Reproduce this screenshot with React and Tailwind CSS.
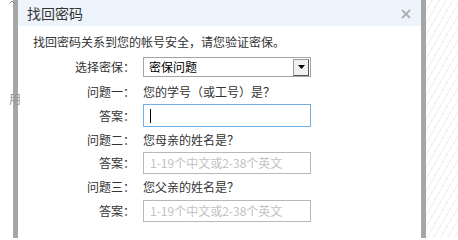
import React from "react";

const font = { fontFamily: '"Noto Sans CJK SC", "Liberation Sans", sans-serif' };

const Label = ({ children }) => (
    <div className="w-[117px] shrink-0 text-right text-[12px] text-[#333]">{children}</div>
);

const AnswerBox = ({ focused, placeholder, height }) => (
    <div
        className={`relative flex w-[168px] items-center pl-[6px] ${height} border ${
            focused ? "border-[#6fb1e6]" : "border-[#b8b8b8]"
        } bg-white`}
    >
        {focused ? (
            <span className="block h-[14px] w-px bg-black" />
        ) : (
            <span className="text-[12px] text-[#c2c2c2]">{placeholder}</span>
        )}
    </div>
);

const questions = [
    { label: "问题一：", text: "您的学号（或工号）是？", focused: true },
    { label: "问题二：", text: "您母亲的姓名是？" },
    { label: "问题三：", text: "您父亲的姓名是？" },
];

export default function App() {
    return (
        <div className="flex h-[238px] w-[458px] overflow-hidden bg-white" style={font}>
            {/* page behind the dialog */}
            <div className="relative w-[13px] shrink-0">
                <span className="absolute left-[9px] top-[93px] text-[12px] leading-none text-[#999]">用</span>
                <svg width="6" height="4" viewBox="0 0 6 4" className="absolute left-[9px] top-0">
                    <path d="M0.5 3.5 L3 1 L5.5 3.5" stroke="#888" fill="none" />
                </svg>
            </div>
            <div className="w-[5px] shrink-0 bg-[#a6a6a6]" />

            {/* dialog */}
            <div className="flex w-[403px] shrink-0 flex-col bg-white">
                <div className="flex h-[26px] items-center justify-between bg-[#eef4fc] pl-[9px] pr-[10px]">
                    <span className="text-[14px] text-[#333]">找回密码</span>
                    <svg width="10" height="10" viewBox="0 0 10 10" className="mt-[1px]">
                        <path d="M1 1 L9 9 M9 1 L1 9" stroke="#b0b0b0" strokeWidth="2" />
                    </svg>
                </div>

                <div className="mt-[6px] flex h-[20px] items-center pl-[15px] text-[12px] text-[#333]">
                    找回密码关系到您的帐号安全，请您验证密保。
                </div>

                <div className="mt-[5px] flex h-[20px] items-center gap-[8px]">
                    <Label>选择密保：</Label>
                    <div className="flex h-[20px] w-[168px] items-center justify-between border border-[#a4a4a4] bg-white pl-[5px] pr-px">
                        <span className="text-[12px] text-black">密保问题</span>
                        <div className="flex h-[17px] w-[16px] items-center justify-center border border-t-[#9a9a9a] border-l-[#9a9a9a] border-b-[#555] border-r-[#555] bg-[#f0f0f0]">
                            <svg width="7" height="4" viewBox="0 0 7 4">
                                <path d="M0 0 H7 L3.5 4 Z" fill="#000" />
                            </svg>
                        </div>
                    </div>
                </div>

                {questions.map((q, i) => (
                    <React.Fragment key={q.label}>
                        <div className={`flex items-center gap-[8px] ${i === 0 ? "mt-[3px] h-[24px]" : "h-[25px]"}`}>
                            <Label>{q.label}</Label>
                            <span className="text-[12px] text-[#333]">{q.text}</span>
                        </div>
                        <div className={`flex items-center gap-[8px] ${i === 2 ? "mt-px" : ""}`}>
                            <Label>答案：</Label>
                            <AnswerBox
                                focused={q.focused}
                                placeholder="1-19个中文或2-38个英文"
                                height={q.focused ? "h-[23px]" : "h-[22px]"}
                            />
                        </div>
                    </React.Fragment>
                ))}
            </div>

            <div className="w-[5px] shrink-0 bg-[#a6a6a6]" />
            <div className="flex-1 bg-[repeating-linear-gradient(120deg,#ffffff_0px,#ffffff_5px,#efefef_5px,#efefef_6px)]" />
        </div>
    );
}
